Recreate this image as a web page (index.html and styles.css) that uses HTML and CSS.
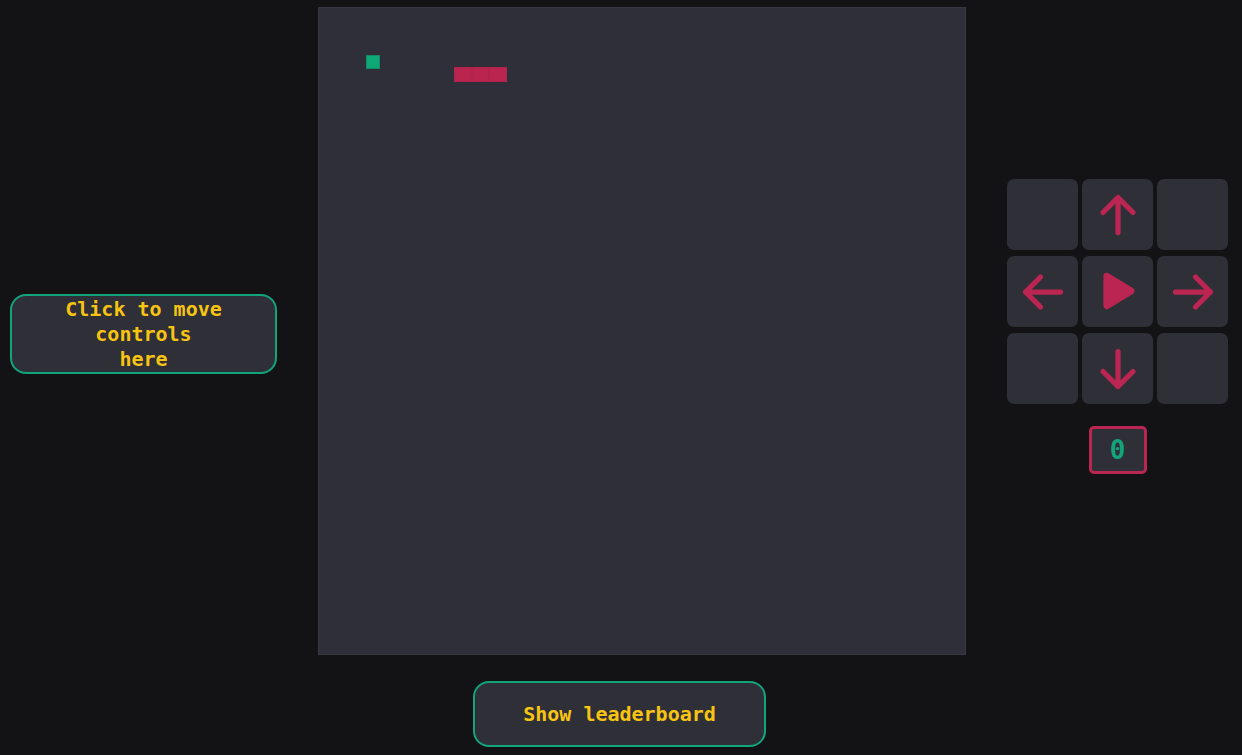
FILE: index.html
```html
<!DOCTYPE html>
<html lang="en">
<head>
<meta charset="utf-8">
<title>Snake</title>
<link rel="stylesheet" href="styles.css">
</head>
<body>
<div class="page">
  <div class="game-row">
    <div class="left-panel">
      <button class="move-btn">Click to move<br>controls<br>here</button>
    </div>
    <div class="board">
      <div class="food"></div>
      <div class="snake">
        <span class="seg"></span><span class="seg"></span><span class="seg"></span>
      </div>
    </div>
    <div class="right-panel">
      <div class="pad">
        <button class="key"></button>
        <button class="key">
          <svg viewBox="0 0 24 24" class="ico"><path d="M12 19V5M6 11 12 5l6 6"/></svg>
        </button>
        <button class="key"></button>
        <button class="key">
          <svg viewBox="0 0 24 24" class="ico"><path d="M19 12H5M11 6 5 12l6 6"/></svg>
        </button>
        <button class="key">
          <svg viewBox="0 0 24 24" class="play"><path d="M7 5.4 17.8 12 7 18.6Z"/></svg>
        </button>
        <button class="key">
          <svg viewBox="0 0 24 24" class="ico"><path d="M5 12h14M13 6l6 6-6 6"/></svg>
        </button>
        <button class="key"></button>
        <button class="key">
          <svg viewBox="0 0 24 24" class="ico"><path d="M12 5v14M6 13l6 6 6-6"/></svg>
        </button>
        <button class="key"></button>
      </div>
      <div class="score">0</div>
    </div>
  </div>
  <div class="footer">
    <button class="leader-btn">Show leaderboard</button>
  </div>
</div>
</body>
</html>
```
FILE: styles.css
```css
* { box-sizing: border-box; }
html, body {
  margin: 0;
  padding: 0;
  background: #131316;
}
body {
  font-family: "DejaVu Sans Mono", "Liberation Mono", monospace;
  width: 1242px;
  height: 755px;
  overflow: hidden;
}
.page {
  display: flex;
  flex-direction: column;
}
.game-row {
  display: flex;
  align-items: flex-start;
  padding-top: 7px;
}
.left-panel {
  width: 318px;
  padding-left: 10px;
}
.move-btn {
  margin-top: 287px;
  width: 267px;
  height: 80px;
  background: #2f2f38;
  border: 2px solid #12a57b;
  border-radius: 16px;
  color: #f7c412;
  font-family: inherit;
  font-weight: bold;
  font-size: 20px;
  line-height: 25px;
  padding: 0;
  text-align: center;
}
.board {
  position: relative;
  width: 648px;
  height: 648px;
  background: #2f2f39;
  border: 1px solid #383842;
  flex: none;
}
.food {
  position: absolute;
  left: 47px;
  top: 47px;
  width: 14px;
  height: 14px;
  background: #0fa978;
  border: 1px solid #168a66;
}
.snake {
  position: absolute;
  left: 135px;
  top: 59px;
  display: flex;
}
.seg {
  width: 17.6px;
  height: 15px;
  background: #ba2550;
  border: 1px solid #b1244c;
}
.right-panel {
  margin-left: 41px;
  margin-top: 172px;
  display: flex;
  flex-direction: column;
  align-items: center;
  width: 221px;
}
.pad {
  display: grid;
  grid-template-columns: repeat(3, 71px);
  grid-template-rows: repeat(3, 71px);
  gap: 6px 4px;
}
.key {
  background: #2f2f38;
  border: none;
  border-radius: 7px;
  padding: 0;
  display: flex;
  align-items: center;
  justify-content: center;
}
.ico {
  width: 60px;
  height: 60px;
  fill: none;
  stroke: #bb2552;
  stroke-width: 2.1;
  stroke-linecap: round;
  stroke-linejoin: round;
}
.play {
  width: 54px;
  height: 54px;
  fill: #bb2552;
  stroke: #bb2552;
  stroke-width: 3;
  stroke-linejoin: round;
  margin-left: 1px;
  margin-top: -2px;
}
.score {
  margin-top: 22px;
  width: 58px;
  height: 48px;
  border: 3px solid #bb2552;
  border-radius: 5px;
  background: #2f2f38;
  color: #12a57b;
  font-weight: bold;
  font-size: 26px;
  display: flex;
  align-items: center;
  justify-content: center;
}
.footer {
  display: flex;
  justify-content: center;
  padding-top: 26px;
  padding-right: 3px;
}
.leader-btn {
  width: 293px;
  height: 66px;
  background: #2f2f38;
  border: 2px solid #12a57b;
  border-radius: 16px;
  color: #f7c412;
  font-family: inherit;
  font-weight: bold;
  font-size: 20px;
  padding: 0;
}
```
